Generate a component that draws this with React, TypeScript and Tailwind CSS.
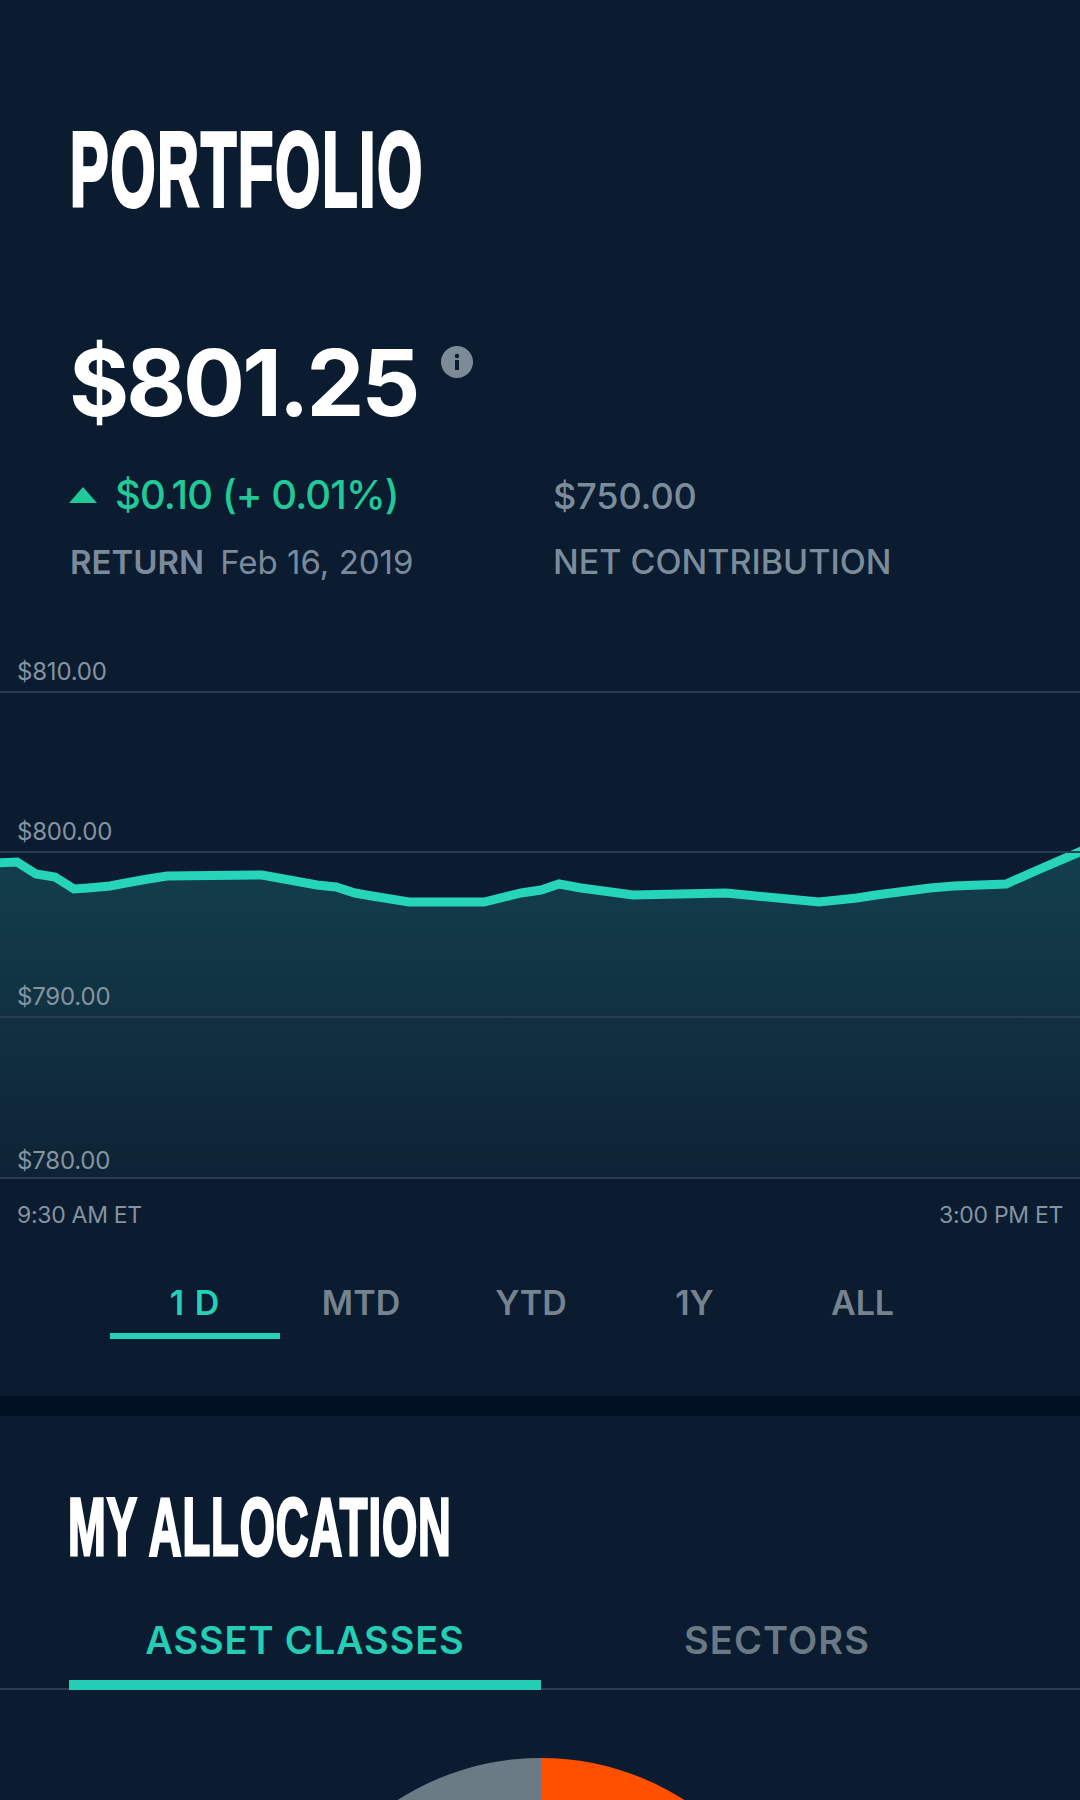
const linePts =
  "-4,863 17,862 36,874 55,877 74,889 88,888 110,886 131,882 148,879 167,876 262,875 317,885 336,887 355,893 372,896 409,902 484,902 521,893 541,890 559,884 581,888 633,895 726,893 819,902 857,898 876,895 930,888 954,886 1006,884 1040,869 1084,850";

function GridRow({ label, className }: { label: string; className: string }) {
  return (
    <div className={`flex items-end border-b-2 border-[#2a3c50] pl-[17px] ${className}`}>
      <span className="text-[24px] leading-[28px] tracking-[-0.2px] text-[#8593a1]">{label}</span>
    </div>
  );
}

function RangeTab({ label, active, className }: { label: string; active?: boolean; className: string }) {
  return (
    <div className={`flex flex-col items-center ${className}`}>
      <span className={`text-[34px] leading-[40px] font-semibold whitespace-nowrap ${active ? "tracking-[1px] text-[#26d0b6]" : "text-[#76838f]"}`}>{label}</span>
      {active && <div className="mt-[10px] h-[6px] w-full bg-[#26d0b6]" />}
    </div>
  );
}

export default function App() {
  return (
    <div className="h-[1800px] w-[1080px] overflow-hidden bg-[#0b1c30] font-['Inter',sans-serif]">
      <section className="pt-[123px] pl-[70px]">
        <h1 className="h-[93px] font-['Liberation_Sans',sans-serif] text-[105px] leading-[93px] font-bold text-white">
          <span className="inline-block origin-left scale-x-[0.55] tracking-[3.5px] whitespace-nowrap [-webkit-text-stroke:4px_white]">PORTFOLIO</span>
        </h1>

        <div className="mt-[121px] flex items-start">
          <span className="-ml-[1px] text-[92px] leading-[92px] font-bold tracking-[-3px] text-white">$801.25</span>
          <svg className="mt-[9px] ml-[24px]" width="32" height="32" viewBox="0 0 32 32">
            <circle cx="16" cy="16" r="16" fill="#7d8b97" />
            <rect x="14" y="14" width="4" height="10" fill="#0b1c30" />
            <circle cx="16" cy="10" r="2.2" fill="#0b1c30" />
          </svg>
        </div>

        <div className="mt-[42px] flex">
          <div className="w-[483px]">
            <div className="flex items-center">
              <svg className="-ml-[1px]" width="28" height="16" viewBox="0 0 28 16">
                <path d="M14 0 L28 16 L0 16 Z" fill="#20c997" />
              </svg>
              <span className="ml-[18px] text-[40px] leading-[48px] font-medium tracking-[-0.9px] text-[#20c997]">$0.10 (+ 0.01%)</span>
            </div>
            <div className="mt-[23px] flex text-[33px] leading-[40px] text-[#7b8a9b]">
              <span className="font-semibold">RETURN</span>
              <span className="ml-[16px]">Feb 16, 2019</span>
            </div>
          </div>
          <div>
            <div className="pt-[1px] text-[36px] leading-[48px] font-medium tracking-[-0.1px] text-[#7b8c9b]">$750.00</div>
            <div className="mt-[22px] text-[34px] leading-[40px] font-medium text-[#7b8c9b]">NET CONTRIBUTION</div>
          </div>
        </div>
      </section>

      <section className="relative mt-[58px]">
        <svg className="absolute top-0 left-0" width="1080" height="540" viewBox="0 640 1080 540">
          <defs>
            <linearGradient id="area" x1="0" y1="850" x2="0" y2="1178" gradientUnits="userSpaceOnUse">
              <stop offset="0" stopColor="#133f4d" />
              <stop offset="1" stopColor="#0e2335" />
            </linearGradient>
          </defs>
          <polygon points={`${linePts} 1084,1178 -4,1178`} fill="url(#area)" />
          <polyline points={linePts} fill="none" stroke="#26d4b9" strokeWidth="9" strokeLinejoin="miter" />
        </svg>
        <div className="relative">
          <GridRow label="$810.00" className="h-[53px] pb-[5px]" />
          <GridRow label="$800.00" className="h-[160px] pb-[5px]" />
          <GridRow label="$790.00" className="h-[165px] pb-[5px]" />
          <GridRow label="$780.00" className="h-[161px] pb-[2px]" />
        </div>
      </section>

      <div className="mt-[22px] flex justify-between px-[17px] text-[23px] leading-[28px] tracking-[-0.3px] text-[#8593a1]">
        <span>9:30 AM ET</span>
        <span>3:00 PM ET</span>
      </div>

      <div className="mt-[54px] flex items-start pl-[110px]">
        <RangeTab label="1 D" active className="w-[170px]" />
        <RangeTab label="MTD" className="ml-[43px] w-[76px]" />
        <RangeTab label="YTD" className="ml-[98px] w-[68px]" />
        <RangeTab label="1Y" className="ml-[111px] w-[37px]" />
        <RangeTab label="ALL" className="ml-[118px] w-[63px]" />
      </div>

      <div className="mt-[57px] h-[20px] bg-[#021024]" />

      <section className="pt-[75px]">
        <h2 className="h-[72px] pl-[68px] font-['Liberation_Sans',sans-serif] text-[81px] leading-[72px] font-bold text-white">
          <span className="inline-block origin-left scale-x-[0.56] tracking-[1.6px] whitespace-nowrap [-webkit-text-stroke:3px_white]">MY ALLOCATION</span>
        </h2>

        <div className="mt-[54px] flex border-b-2 border-[#2a3c50] pl-[69px]">
          <div className="-mb-[2px] flex h-[73px] w-[472px] justify-center border-b-[10px] border-[#26cdb5]">
            <span className="text-[38px] leading-[46px] font-semibold tracking-[0.85px] whitespace-nowrap text-[#26cdb5]">ASSET CLASSES</span>
          </div>
          <div className="ml-[143px] text-[38px] leading-[46px] font-semibold tracking-[1.1px] text-[#6b7986]">SECTORS</div>
        </div>

        <svg className="mt-[68px]" width="1080" height="60" viewBox="0 1758 1080 60">
          <path d="M541 1758 A266 266 0 0 0 275 2024 L541 2024 Z" fill="#6a7b86" />
          <path d="M541 1758 A266 266 0 0 1 807 2024 L541 2024 Z" fill="#ff4f00" />
        </svg>
      </section>
    </div>
  );
}
